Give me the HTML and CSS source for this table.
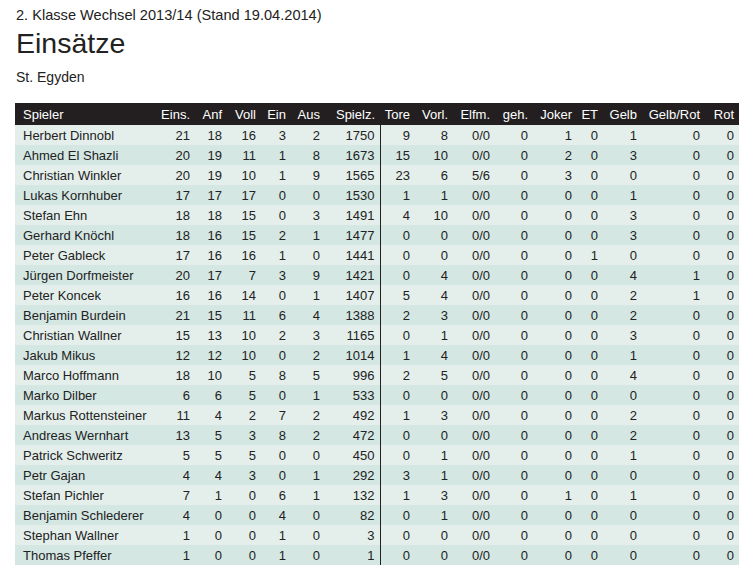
FILE: index.html
```html
<!DOCTYPE html>
<html lang="de">
<head>
<meta charset="utf-8">
<title>Einsätze</title>
<link rel="stylesheet" href="styles.css">
</head>
<body>
<div class="page">
  <p class="league">2. Klasse Wechsel 2013/14 (Stand 19.04.2014)</p>
  <h1 class="title">Einsätze</h1>
  <p class="team">St. Egyden</p>
  <table class="stats">
    <colgroup>
      <col class="c-name"><col class="c-eins"><col class="c-anf"><col class="c-voll"><col class="c-ein"><col class="c-aus"><col class="c-spielz"><col class="c-tore"><col class="c-vorl"><col class="c-elfm"><col class="c-geh"><col class="c-joker"><col class="c-et"><col class="c-gelb"><col class="c-gr"><col class="c-rot">
    </colgroup>
    <thead>
      <tr><th class="name">Spieler</th><th>Eins.</th><th>Anf</th><th>Voll</th><th>Ein</th><th>Aus</th><th>Spielz.</th><th>Tore</th><th>Vorl.</th><th>Elfm.</th><th>geh.</th><th>Joker</th><th>ET</th><th>Gelb</th><th>Gelb/Rot</th><th>Rot</th></tr>
    </thead>
    <tbody>
      <tr><td class="name">Herbert Dinnobl</td><td>21</td><td>18</td><td>16</td><td>3</td><td>2</td><td>1750</td><td class="sep">9</td><td>8</td><td>0/0</td><td>0</td><td>1</td><td>0</td><td>1</td><td>0</td><td>0</td></tr>
      <tr><td class="name">Ahmed El Shazli</td><td>20</td><td>19</td><td>11</td><td>1</td><td>8</td><td>1673</td><td class="sep">15</td><td>10</td><td>0/0</td><td>0</td><td>2</td><td>0</td><td>3</td><td>0</td><td>0</td></tr>
      <tr><td class="name">Christian Winkler</td><td>20</td><td>19</td><td>10</td><td>1</td><td>9</td><td>1565</td><td class="sep">23</td><td>6</td><td>5/6</td><td>0</td><td>3</td><td>0</td><td>0</td><td>0</td><td>0</td></tr>
      <tr><td class="name">Lukas Kornhuber</td><td>17</td><td>17</td><td>17</td><td>0</td><td>0</td><td>1530</td><td class="sep">1</td><td>1</td><td>0/0</td><td>0</td><td>0</td><td>0</td><td>1</td><td>0</td><td>0</td></tr>
      <tr><td class="name">Stefan Ehn</td><td>18</td><td>18</td><td>15</td><td>0</td><td>3</td><td>1491</td><td class="sep">4</td><td>10</td><td>0/0</td><td>0</td><td>0</td><td>0</td><td>3</td><td>0</td><td>0</td></tr>
      <tr><td class="name">Gerhard Knöchl</td><td>18</td><td>16</td><td>15</td><td>2</td><td>1</td><td>1477</td><td class="sep">0</td><td>0</td><td>0/0</td><td>0</td><td>0</td><td>0</td><td>3</td><td>0</td><td>0</td></tr>
      <tr><td class="name">Peter Gableck</td><td>17</td><td>16</td><td>16</td><td>1</td><td>0</td><td>1441</td><td class="sep">0</td><td>0</td><td>0/0</td><td>0</td><td>0</td><td>1</td><td>0</td><td>0</td><td>0</td></tr>
      <tr><td class="name">Jürgen Dorfmeister</td><td>20</td><td>17</td><td>7</td><td>3</td><td>9</td><td>1421</td><td class="sep">0</td><td>4</td><td>0/0</td><td>0</td><td>0</td><td>0</td><td>4</td><td>1</td><td>0</td></tr>
      <tr><td class="name">Peter Koncek</td><td>16</td><td>16</td><td>14</td><td>0</td><td>1</td><td>1407</td><td class="sep">5</td><td>4</td><td>0/0</td><td>0</td><td>0</td><td>0</td><td>2</td><td>1</td><td>0</td></tr>
      <tr><td class="name">Benjamin Burdein</td><td>21</td><td>15</td><td>11</td><td>6</td><td>4</td><td>1388</td><td class="sep">2</td><td>3</td><td>0/0</td><td>0</td><td>0</td><td>0</td><td>2</td><td>0</td><td>0</td></tr>
      <tr><td class="name">Christian Wallner</td><td>15</td><td>13</td><td>10</td><td>2</td><td>3</td><td>1165</td><td class="sep">0</td><td>1</td><td>0/0</td><td>0</td><td>0</td><td>0</td><td>3</td><td>0</td><td>0</td></tr>
      <tr><td class="name">Jakub Mikus</td><td>12</td><td>12</td><td>10</td><td>0</td><td>2</td><td>1014</td><td class="sep">1</td><td>4</td><td>0/0</td><td>0</td><td>0</td><td>0</td><td>1</td><td>0</td><td>0</td></tr>
      <tr><td class="name">Marco Hoffmann</td><td>18</td><td>10</td><td>5</td><td>8</td><td>5</td><td>996</td><td class="sep">2</td><td>5</td><td>0/0</td><td>0</td><td>0</td><td>0</td><td>4</td><td>0</td><td>0</td></tr>
      <tr><td class="name">Marko Dilber</td><td>6</td><td>6</td><td>5</td><td>0</td><td>1</td><td>533</td><td class="sep">0</td><td>0</td><td>0/0</td><td>0</td><td>0</td><td>0</td><td>0</td><td>0</td><td>0</td></tr>
      <tr><td class="name">Markus Rottensteiner</td><td>11</td><td>4</td><td>2</td><td>7</td><td>2</td><td>492</td><td class="sep">1</td><td>3</td><td>0/0</td><td>0</td><td>0</td><td>0</td><td>2</td><td>0</td><td>0</td></tr>
      <tr><td class="name">Andreas Wernhart</td><td>13</td><td>5</td><td>3</td><td>8</td><td>2</td><td>472</td><td class="sep">0</td><td>0</td><td>0/0</td><td>0</td><td>0</td><td>0</td><td>2</td><td>0</td><td>0</td></tr>
      <tr><td class="name">Patrick Schweritz</td><td>5</td><td>5</td><td>5</td><td>0</td><td>0</td><td>450</td><td class="sep">0</td><td>1</td><td>0/0</td><td>0</td><td>0</td><td>0</td><td>1</td><td>0</td><td>0</td></tr>
      <tr><td class="name">Petr Gajan</td><td>4</td><td>4</td><td>3</td><td>0</td><td>1</td><td>292</td><td class="sep">3</td><td>1</td><td>0/0</td><td>0</td><td>0</td><td>0</td><td>0</td><td>0</td><td>0</td></tr>
      <tr><td class="name">Stefan Pichler</td><td>7</td><td>1</td><td>0</td><td>6</td><td>1</td><td>132</td><td class="sep">1</td><td>3</td><td>0/0</td><td>0</td><td>1</td><td>0</td><td>1</td><td>0</td><td>0</td></tr>
      <tr><td class="name">Benjamin Schlederer</td><td>4</td><td>0</td><td>0</td><td>4</td><td>0</td><td>82</td><td class="sep">0</td><td>1</td><td>0/0</td><td>0</td><td>0</td><td>0</td><td>0</td><td>0</td><td>0</td></tr>
      <tr><td class="name">Stephan Wallner</td><td>1</td><td>0</td><td>0</td><td>1</td><td>0</td><td>3</td><td class="sep">0</td><td>0</td><td>0/0</td><td>0</td><td>0</td><td>0</td><td>0</td><td>0</td><td>0</td></tr>
      <tr><td class="name">Thomas Pfeffer</td><td>1</td><td>0</td><td>0</td><td>1</td><td>0</td><td>1</td><td class="sep">0</td><td>0</td><td>0/0</td><td>0</td><td>0</td><td>0</td><td>0</td><td>0</td><td>0</td></tr>
    </tbody>
  </table>
</div>
</body>
</html>
```

FILE: styles.css
```css
html, body {
  margin: 0;
  padding: 0;
  background: #ffffff;
}

body {
  font-family: "Liberation Sans", Arial, sans-serif;
  color: #222222;
}

.page {
  padding: 5px 14px 0 15px;
}

.league {
  margin: 0;
  padding-left: 1px;
  font-size: 14.6px;
  line-height: 20px;
}

.title {
  margin: 1px 0 0;
  padding-left: 1px;
  font-size: 28.5px;
  font-weight: normal;
  line-height: 34px;
}

.team {
  margin: 7px 0 0;
  padding-left: 1px;
  font-size: 14px;
  line-height: 20px;
}

.stats {
  margin-top: 16px;
  width: 724px;
  table-layout: fixed;
  border-collapse: collapse;
  font-size: 13px;
}

.c-name { width: 140px; }
.c-eins { width: 40px; }
.c-anf { width: 32px; }
.c-voll { width: 34px; }
.c-ein { width: 30px; }
.c-aus { width: 34px; }
.c-spielz { width: 55px; }
.c-tore { width: 35px; }
.c-vorl { width: 38px; }
.c-elfm { width: 42px; }
.c-geh { width: 38px; }
.c-joker { width: 44px; }
.c-et { width: 26px; }
.c-gelb { width: 39px; }
.c-gr { width: 63px; }
.c-rot { width: 34px; }

.stats th,
.stats td {
  padding: 0 5px 0 0;
  text-align: right;
  white-space: nowrap;
  overflow: hidden;
}

.stats th {
  height: 21px;
  padding-top: 1px;
  background: #231f20;
  color: #ffffff;
  font-weight: normal;
}

.stats td {
  height: 20px;
  color: #222222;
}

.stats .name {
  padding-left: 8px;
  text-align: left;
}

.stats tbody tr:nth-child(odd) td {
  background: #e4efeb;
}

.stats tbody tr:nth-child(even) td {
  background: #d4e7e2;
}

.stats td.sep {
  border-left: 1px solid #222222;
}
```
